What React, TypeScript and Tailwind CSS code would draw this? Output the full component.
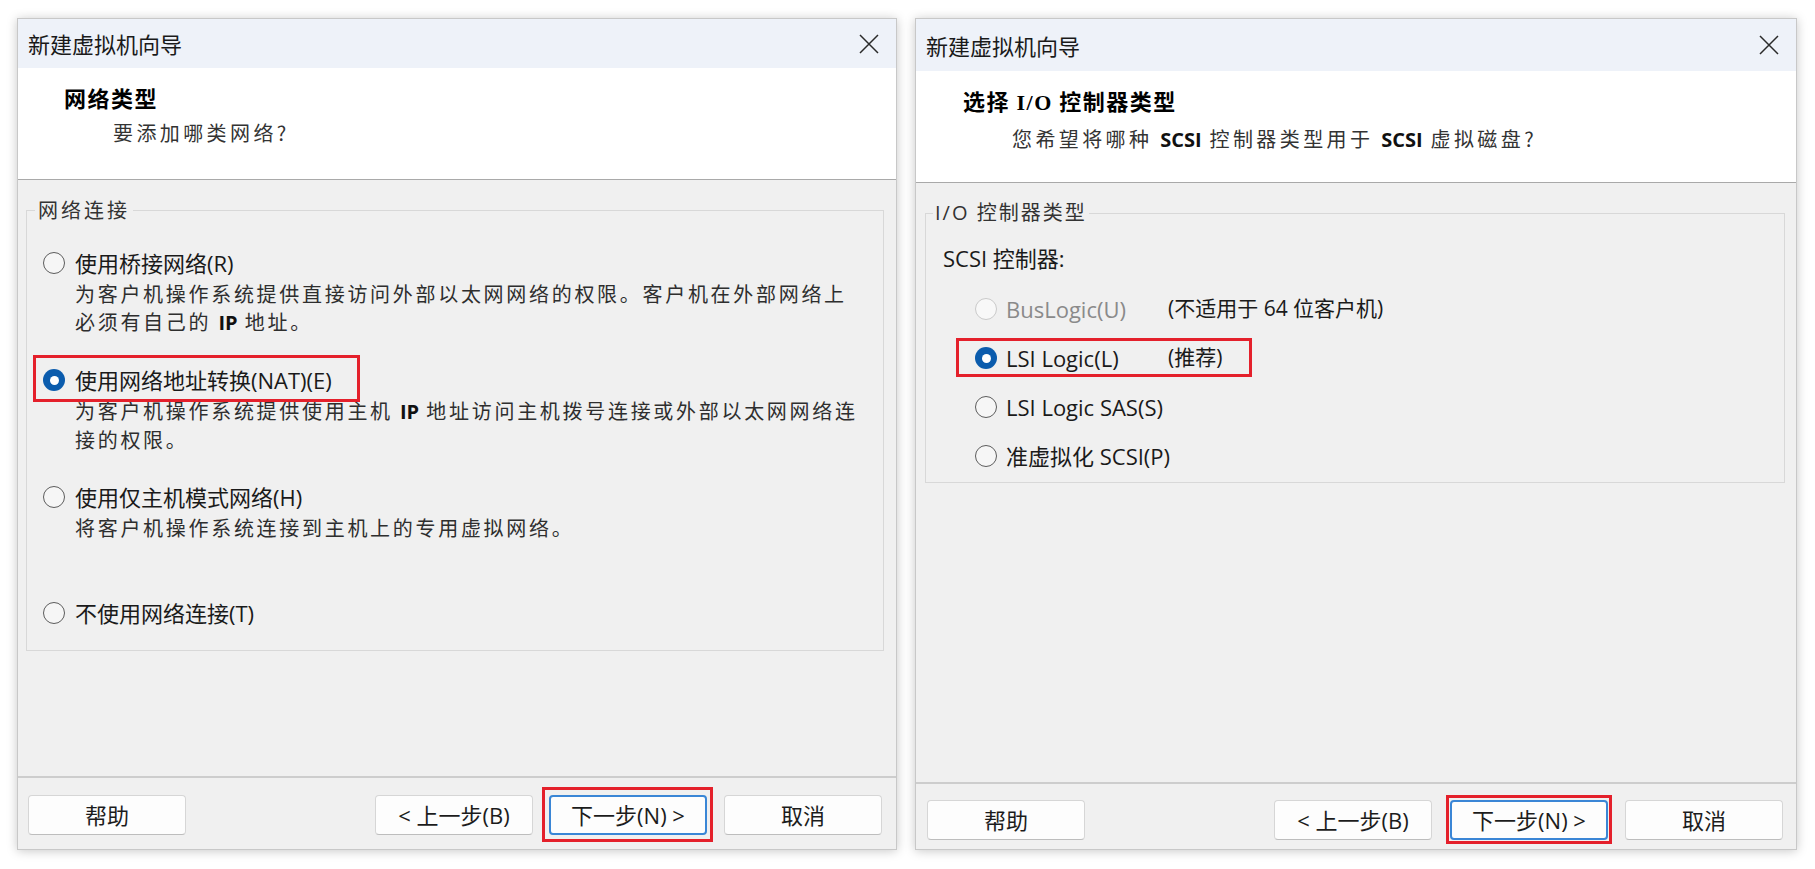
import clsx from "clsx";
import { ReactNode } from "react";

const ui = "font-['Open_Sans','Noto_Sans_CJK_SC',sans-serif]";
const cjk = "font-['Noto_Sans_CJK_SC',sans-serif]";

function Radio({ checked, disabled }: { checked?: boolean; disabled?: boolean }) {
  if (checked) {
    return (
      <span className="flex h-[22px] w-[22px] shrink-0 items-center justify-center rounded-full bg-[#0b5cad]">
        <span className="h-[9px] w-[9px] rounded-full bg-white" />
      </span>
    );
  }
  return (
    <span
      className={clsx(
        "h-[22px] w-[22px] shrink-0 rounded-full border-[1.5px]",
        disabled ? "border-[#cacaca] bg-[#f8f8f8]" : "border-[#5c5c5c] bg-[#f6f6f6]"
      )}
    />
  );
}

function Mark({ className }: { className: string }) {
  return (
    <span
      className={clsx(
        "pointer-events-none absolute border-[3px] border-[#e4202b]",
        className
      )}
    />
  );
}

function CloseIcon() {
  return (
    <svg width="22" height="22" viewBox="0 0 22 22" fill="none">
      <path d="M2 2L20 20M20 2L2 20" stroke="#2a2a2a" strokeWidth="1.5" />
    </svg>
  );
}

function Button({ children, focused }: { children: ReactNode; focused?: boolean }) {
  return (
    <button
      className={clsx(
        "h-[40px] w-[158px] rounded-[4px] bg-[#fdfdfd] text-[22px] text-[#1c1c1c]",
        ui,
        focused
          ? "border-2 border-[#3a86d6]"
          : "border border-[#d6d6d6] border-b-[#bdbdbd]"
      )}
    >
      {children}
    </button>
  );
}

function Dialog({
  titleH,
  heading,
  sub,
  children,
  footer,
}: {
  titleH: string;
  heading: ReactNode;
  sub: ReactNode;
  children: ReactNode;
  footer: ReactNode;
}) {
  return (
    <div className="flex h-[832px] flex-col border border-[#c8c8c8] bg-[#f0f0f0] shadow-[0_1px_10px_rgba(0,0,0,0.22)]">
      <div className={clsx("flex items-center justify-between bg-[#eef2f9] pl-[10px] pr-[16px]", titleH)}>
        <span className={clsx("text-[22px] text-[#1a1a1a]", cjk)}>新建虚拟机向导</span>
        <CloseIcon />
      </div>
      <div className="h-[112px] border-b border-[#a9a9a9] bg-white pt-[15px]">
        <div
          className={clsx(
            "pl-[46px] text-[22px] font-bold leading-[28px] tracking-[1.5px] text-black",
            cjk
          )}
        >
          {heading}
        </div>
        <div
          className={clsx(
            "mt-[8px] pl-[95px] text-[20px] leading-[28px] tracking-[3.4px] text-[#333]",
            cjk
          )}
        >
          {sub}
        </div>
      </div>
      <div className="flex-1">{children}</div>
      {footer}
    </div>
  );
}

function Desc({ lines, minH }: { lines: ReactNode[]; minH?: string }) {
  return (
    <div
      className={clsx(
        "ml-[32px] whitespace-nowrap text-[20px] leading-[28px] tracking-[2.7px] text-[#2e2e2e]",
        cjk,
        minH
      )}
    >
      {lines.map((l, i) => (
        <div key={i}>{l}</div>
      ))}
    </div>
  );
}

function Option({
  label,
  checked,
  desc,
  marked,
  minH,
}: {
  label: string;
  checked?: boolean;
  desc?: ReactNode[];
  marked?: boolean;
  minH?: string;
}) {
  return (
    <div>
      <div className="relative flex h-[34px] items-center">
        <Radio checked={checked} />
        <span className={clsx("ml-[10px] text-[22px] text-[#1a1a1a]", ui)}>{label}</span>
        {marked && <Mark className="left-[-10px] top-[-8px] bottom-[-5px] w-[327px]" />}
      </div>
      {desc && <Desc lines={desc} minH={minH} />}
    </div>
  );
}

const B = ({ children }: { children: ReactNode }) => (
  <span className="font-['Open_Sans',sans-serif] font-bold tracking-normal text-[#111]">
    {children}
  </span>
);

function NetworkDialog() {
  return (
    <div className="w-[880px]">
      <Dialog
        titleH="h-[49px]"
        heading="网络类型"
        sub="要添加哪类网络?"
        footer={
          <div className="flex h-[73px] items-start border-t-2 border-[#cdcdcd] pl-[10px] pr-[14px] pt-[17px]">
            <Button>帮助</Button>
            <div className="ml-auto flex items-start gap-[16px]">
              <Button>&lt; 上一步(B)</Button>
              <span className="relative flex">
                <Button focused>下一步(N) &gt;</Button>
                <Mark className="left-[-7px] right-[-6px] top-[-8px] bottom-[-7px]" />
              </span>
              <span className="ml-[1px] flex">
                <Button>取消</Button>
              </span>
            </div>
          </div>
        }
      >
        <fieldset className="ml-[8px] mr-[12px] mt-[16px] border border-[#d8d8d8] pb-[20px]">
          <legend className={clsx("ml-[8px] px-[3px] text-[20px] leading-[28px] tracking-[3px] text-[#333]", cjk)}>
            网络连接
          </legend>
          <div className="flex flex-col gap-[26px] pl-[16px] pt-[22px]">
            <Option
              label="使用桥接网络(R)"
              desc={[
                "为客户机操作系统提供直接访问外部以太网网络的权限。客户机在外部网络上",
                <>
                  必须有自己的 <B>IP</B> 地址。
                </>,
              ]}
            />
            <Option
              label="使用网络地址转换(NAT)(E)"
              checked
              marked
              desc={[
                <>
                  为客户机操作系统提供使用主机 <B>IP</B> 地址访问主机拨号连接或外部以太网网络连
                </>,
                "接的权限。",
              ]}
            />
            <Option
              label="使用仅主机模式网络(H)"
              desc={["将客户机操作系统连接到主机上的专用虚拟网络。"]}
              minH="min-h-[56px]"
            />
            <Option label="不使用网络连接(T)" />
          </div>
        </fieldset>
      </Dialog>
    </div>
  );
}

function ControllerDialog() {
  const rows = [
    { label: "BusLogic(U)", note: "(不适用于 64 位客户机)", disabled: true },
    { label: "LSI Logic(L)", note: "(推荐)", checked: true },
    { label: "LSI Logic SAS(S)" },
    { label: "准虚拟化 SCSI(P)" },
  ];
  return (
    <div className="w-[882px]">
      <Dialog
        titleH="h-[52px]"
        heading={
          <span className="ml-[1px]">
            选择 <span className="font-['Liberation_Serif',serif]">I/O</span> 控制器类型
          </span>
        }
        sub={
          <span className="ml-[1px]">
            您希望将哪种 <B>SCSI</B> 控制器类型用于 <B>SCSI</B> 虚拟磁盘?
          </span>
        }
        footer={
          <div className="flex h-[67px] items-start border-t-2 border-[#cdcdcd] pl-[11px] pr-[13px] pt-[16px]">
            <Button>帮助</Button>
            <div className="ml-auto flex items-start gap-[17px]">
              <span className="mr-[1px] flex">
                <Button>&lt; 上一步(B)</Button>
              </span>
              <span className="relative flex">
                <Button focused>下一步(N) &gt;</Button>
                <Mark className="left-[-4px] right-[-4px] top-[-5px] bottom-[-4px]" />
              </span>
              <Button>取消</Button>
            </div>
          </div>
        }
      >
        <fieldset className="ml-[9px] mr-[11px] mt-[16px] border border-[#d8d8d8] pb-[9px]">
          <legend className={clsx("ml-[7px] px-[2px] text-[20px] leading-[28px] tracking-[2px] text-[#333]", ui)}>
            I/O 控制器类型
          </legend>
          <div className="pl-[17px]">
            <div className={clsx("pt-[17px] text-[22px] leading-[28px] text-[#1a1a1a]", ui)}>
              SCSI 控制器:
            </div>
            <div className="ml-[32px] mt-[20px] flex flex-col gap-[15px]">
              {rows.map((r) => (
                <div key={r.label} className="relative flex h-[34px] items-center">
                  <Radio checked={r.checked} disabled={r.disabled} />
                  <span
                    className={clsx(
                      "ml-[9px] min-w-[162px] whitespace-nowrap text-[22px]",
                      ui,
                      r.disabled ? "text-[#8a8a8a]" : "text-[#1a1a1a]"
                    )}
                  >
                    {r.label}
                  </span>
                  {r.note && (
                    <span className={clsx("whitespace-nowrap text-[21px] text-[#1a1a1a]", ui)}>
                      {r.note}
                    </span>
                  )}
                  {r.checked && <Mark className="left-[-19px] top-[-3px] bottom-[-2px] w-[296px]" />}
                </div>
              ))}
            </div>
          </div>
        </fieldset>
      </Dialog>
    </div>
  );
}

export default function App() {
  return (
    <div className="flex min-h-screen gap-[18px] bg-white pl-[17px] pt-[18px]">
      <NetworkDialog />
      <ControllerDialog />
    </div>
  );
}
